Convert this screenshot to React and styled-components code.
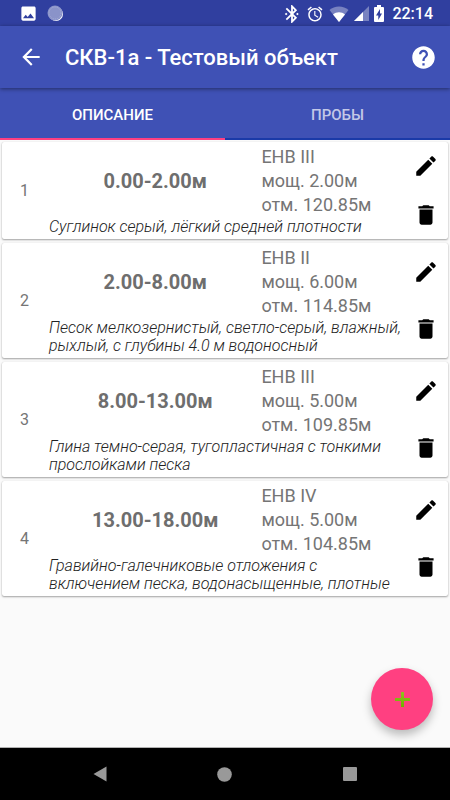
import React from "react";
import styled, { createGlobalStyle } from "styled-components";
import { MdAlarm, MdArrowBack, MdHelp, MdImage } from "react-icons/md";

const layers = [
  {
    id: 1,
    depth: "0.00-2.00м",
    category: "ЕНВ III",
    thickness: "2.00м",
    mark: "120.85м",
    desc: "Суглинок серый, лёгкий средней плотности",
  },
  {
    id: 2,
    depth: "2.00-8.00м",
    category: "ЕНВ II",
    thickness: "6.00м",
    mark: "114.85м",
    desc: "Песок мелкозернистый, светло-серый, влажный, рыхлый, с глубины 4.0 м водоносный",
  },
  {
    id: 3,
    depth: "8.00-13.00м",
    category: "ЕНВ III",
    thickness: "5.00м",
    mark: "109.85м",
    desc: "Глина темно-серая, тугопластичная с тонкими прослойками песка",
  },
  {
    id: 4,
    depth: "13.00-18.00м",
    category: "ЕНВ IV",
    thickness: "5.00м",
    mark: "104.85м",
    desc: "Гравийно-галечниковые отложения с включением песка, водонасыщенные, плотные",
  },
];

const GlobalStyle = createGlobalStyle`
  * {
    box-sizing: border-box;
  }
  body {
    margin: 0;
    background: #fafafa;
    font-family: Roboto, "Noto Sans", sans-serif;
  }
  button {
    padding: 0;
    border: 0;
    background: none;
    font: inherit;
    color: inherit;
    cursor: pointer;
  }
  svg {
    display: block;
  }
`;

const Screen = styled.div`
  display: flex;
  flex-direction: column;
  min-height: 100vh;
`;

const StatusBar = styled.div`
  display: flex;
  align-items: center;
  justify-content: space-between;
  height: 26px;
  padding: 1px 17px 0 19px;
  background: #303f9f;
  color: #fff;
`;

const StatusGroup = styled.div`
  display: flex;
  align-items: center;
  gap: ${({ $gap }) => $gap}px;
`;

const Clock = styled.span`
  margin-left: 3px;
  font-size: 16px;
  line-height: 20px;
  font-weight: 500;
`;

const Toolbar = styled.header`
  position: relative;
  display: flex;
  align-items: center;
  height: 62px;
  padding: 0 13px 0 18px;
  background: #3f51b5;
  color: #fff;
  box-shadow: 0 1px 4px rgba(0, 0, 0, 0.45);
`;

const Title = styled.h1`
  flex: 1;
  margin: 2px 0 0 21px;
  font-size: 22px;
  line-height: 28px;
  font-weight: 500;
`;

const Tabs = styled.div`
  display: flex;
  height: 52px;
  background: #3f51b5;
`;

const Tab = styled.button`
  && {
    flex: 1;
    padding-top: 3px;
    border-bottom: 2px solid ${({ $active }) => ($active ? "#ff4081" : "#1a3aa8")};
    color: ${({ $active }) => ($active ? "#fff" : "rgba(255, 255, 255, 0.7)")};
    font-size: 15px;
    line-height: 20px;
    font-weight: 500;
  }
`;

const Content = styled.main`
  position: relative;
  flex: 1;
  border-bottom: 1px solid #b0b0b0;
`;

const List = styled.ul`
  display: flex;
  flex-direction: column;
  gap: 4px;
  margin: 0;
  padding: 2px 2px 4px;
  list-style: none;
`;

const Card = styled.li`
  display: flex;
  border-radius: 2px;
  background: #fff;
  box-shadow: 0 1px 2px rgba(0, 0, 0, 0.35), 0 0 1px rgba(0, 0, 0, 0.15);
`;

const Number = styled.div`
  display: flex;
  align-items: center;
  justify-content: center;
  width: 45px;
  color: #757575;
  font-size: 16px;
`;

const Body = styled.div`
  flex: 1;
  padding: 3px 0 3px 2px;
`;

const Summary = styled.div`
  display: grid;
  grid-template-columns: 3fr 2fr;
  align-items: center;
`;

const Depth = styled.div`
  color: #6e6e6e;
  font-size: 20px;
  font-weight: 700;
  text-align: center;
`;

const Info = styled.div`
  color: #757575;
  font-size: 18px;
  line-height: 24px;
`;

const Desc = styled.p`
  margin: 1px 0 0;
  color: #222;
  font-size: 16px;
  line-height: 18px;
  font-style: italic;
  font-weight: 300;
`;

const Actions = styled.div`
  display: flex;
  flex-direction: column;
  width: 45px;
`;

const ActionButton = styled.button`
  display: flex;
  flex: 1;
  align-items: center;
  justify-content: center;
  && {
    color: #000;
  }
`;

const AddButton = styled.button`
  position: absolute;
  right: 17px;
  bottom: 17px;
  display: flex;
  align-items: center;
  justify-content: center;
  width: 62px;
  height: 62px;
  && {
    border-radius: 50%;
    background: #ff4081;
    box-shadow: 0 5px 10px rgba(0, 0, 0, 0.26);
  }
`;

const NavBar = styled.nav`
  display: flex;
  align-items: center;
  justify-content: space-around;
  height: 52px;
  padding: 0 38px;
  background: #000;
  color: #999;
`;

function SyncIcon() {
  return (
    <svg width="17" height="17" viewBox="0 0 17 17">
      <circle cx="9" cy="9" r="7" fill="#fff" />
      <circle cx="8" cy="8" r="7.5" fill="#8a93c9" />
      <circle cx="8" cy="8" r="6" fill="none" stroke="#a9b0da" strokeDasharray="1 1" />
    </svg>
  );
}

function BluetoothIcon() {
  return (
    <svg width="18" height="18" viewBox="2 2 20 20" fill="currentColor">
      <path d="M7 12l-1.500-1.500L4 12l1.500 1.500L7 12zm10.710-4.290L12 2h-1v7.590L6.410 5 5 6.410 10.590 12 5 17.590 6.410 19 11 14.410V22h1l5.710-5.710-4.300-4.290 4.300-4.290zM13 5.830l1.880 1.880L13 9.590V5.830zm1.880 10.460L13 18.170v-3.760l1.880 1.880zM18 10.500L16.500 12l1.500 1.500 1.500-1.500-1.500-1.500z" />
    </svg>
  );
}

function WifiIcon() {
  return (
    <svg width="20" height="16" viewBox="0 0 20 16">
      <path d="M10 16 0.5 4C3 1.8 6.300.5 10 .5s7 1.300 9.500 3.500z" fill="#fff" opacity=".35" />
      <path d="M10 16 4 8.400C5.700 7 7.800 6.200 10 6.200s4.300.800 6 2.200z" fill="#fff" />
    </svg>
  );
}

function SignalIcon() {
  return (
    <svg width="15" height="15" viewBox="0 0 15 15">
      <path d="M0 15 15 0v15z" fill="#fff" opacity=".35" />
      <path d="M0 15 9 6v9z" fill="#fff" />
    </svg>
  );
}

function BatteryIcon() {
  return (
    <svg width="10" height="17" viewBox="0 0 10 17">
      <path
        fillRule="evenodd"
        d="M3 0h4v2h2q1 0 1 1v13q0 1-1 1H1q-1 0-1-1V3q0-1 1-1h2zM6 4 2 10.500h2.300V15L8 8.500H6z"
        fill="#fff"
      />
    </svg>
  );
}

function EditIcon() {
  return (
    <svg width="26" height="26" viewBox="0 0 24 24" fill="currentColor">
      <path d="M3 17.250V21h3.750L17.810 9.940l-3.750-3.750L3 17.250zM20.710 7.040c.39-.39.39-1.020 0-1.410l-2.340-2.340c-.39-.39-1.020-.39-1.410 0l-1.830 1.830 3.750 3.750 1.830-1.830z" />
    </svg>
  );
}

function DeleteIcon() {
  return (
    <svg width="26" height="26" viewBox="0 0 24 24" fill="currentColor">
      <path d="M6 19c0 1.100.9 2 2 2h8c1.100 0 2-.9 2-2V7H6v12zM19 4h-3.500l-1-1h-5l-1 1H5v2h14V4z" />
    </svg>
  );
}

function PlusIcon() {
  return (
    <svg width="15" height="15" viewBox="0 0 15 15">
      <defs>
        <linearGradient id="plus" x1="0" y1="0" x2="0" y2="1">
          <stop offset="0" stopColor="#8fc31f" />
          <stop offset="1" stopColor="#6fb000" />
        </linearGradient>
      </defs>
      <path d="M6 0h3v6h6v3H9v6H6V9H0V6h6z" fill="url(#plus)" />
    </svg>
  );
}

function LayerCard({ id, depth, category, thickness, mark, desc }) {
  return (
    <Card>
      <Number>{id}</Number>
      <Body>
        <Summary>
          <Depth>{depth}</Depth>
          <Info>
            <div>{category}</div>
            <div>мощ. {thickness}</div>
            <div>отм. {mark}</div>
          </Info>
        </Summary>
        <Desc>{desc}</Desc>
      </Body>
      <Actions>
        <ActionButton aria-label="Изменить">
          <EditIcon />
        </ActionButton>
        <ActionButton aria-label="Удалить">
          <DeleteIcon />
        </ActionButton>
      </Actions>
    </Card>
  );
}

export default function App() {
  return (
    <>
      <GlobalStyle />
      <Screen>
        <StatusBar>
          <StatusGroup $gap={9}>
            <MdImage size={19} />
            <SyncIcon />
          </StatusGroup>
          <StatusGroup $gap={5}>
            <BluetoothIcon />
            <MdAlarm size={18} />
            <WifiIcon />
            <SignalIcon />
            <BatteryIcon />
            <Clock>22:14</Clock>
          </StatusGroup>
        </StatusBar>
        <Toolbar>
          <button aria-label="Назад">
            <MdArrowBack size={26} />
          </button>
          <Title>СКВ-1а - Тестовый объект</Title>
          <button aria-label="Справка">
            <MdHelp size={27} />
          </button>
        </Toolbar>
        <Tabs role="tablist">
          <Tab role="tab" aria-selected="true" $active>
            ОПИСАНИЕ
          </Tab>
          <Tab role="tab" aria-selected="false">
            ПРОБЫ
          </Tab>
        </Tabs>
        <Content>
          <List>
            {layers.map((layer) => (
              <LayerCard key={layer.id} {...layer} />
            ))}
          </List>
          <AddButton aria-label="Добавить">
            <PlusIcon />
          </AddButton>
        </Content>
        <NavBar>
          <button aria-label="Назад">
            <svg width="14" height="16" viewBox="0 0 14 16">
              <path d="M13.500.5v15L.5 8z" fill="currentColor" />
            </svg>
          </button>
          <button aria-label="Домой">
            <svg width="15" height="15" viewBox="0 0 15 15">
              <circle cx="7.500" cy="7.500" r="7.300" fill="currentColor" />
            </svg>
          </button>
          <button aria-label="Обзор">
            <svg width="14" height="14" viewBox="0 0 14 14">
              <rect width="14" height="14" rx="1" fill="currentColor" />
            </svg>
          </button>
        </NavBar>
      </Screen>
    </>
  );
}
